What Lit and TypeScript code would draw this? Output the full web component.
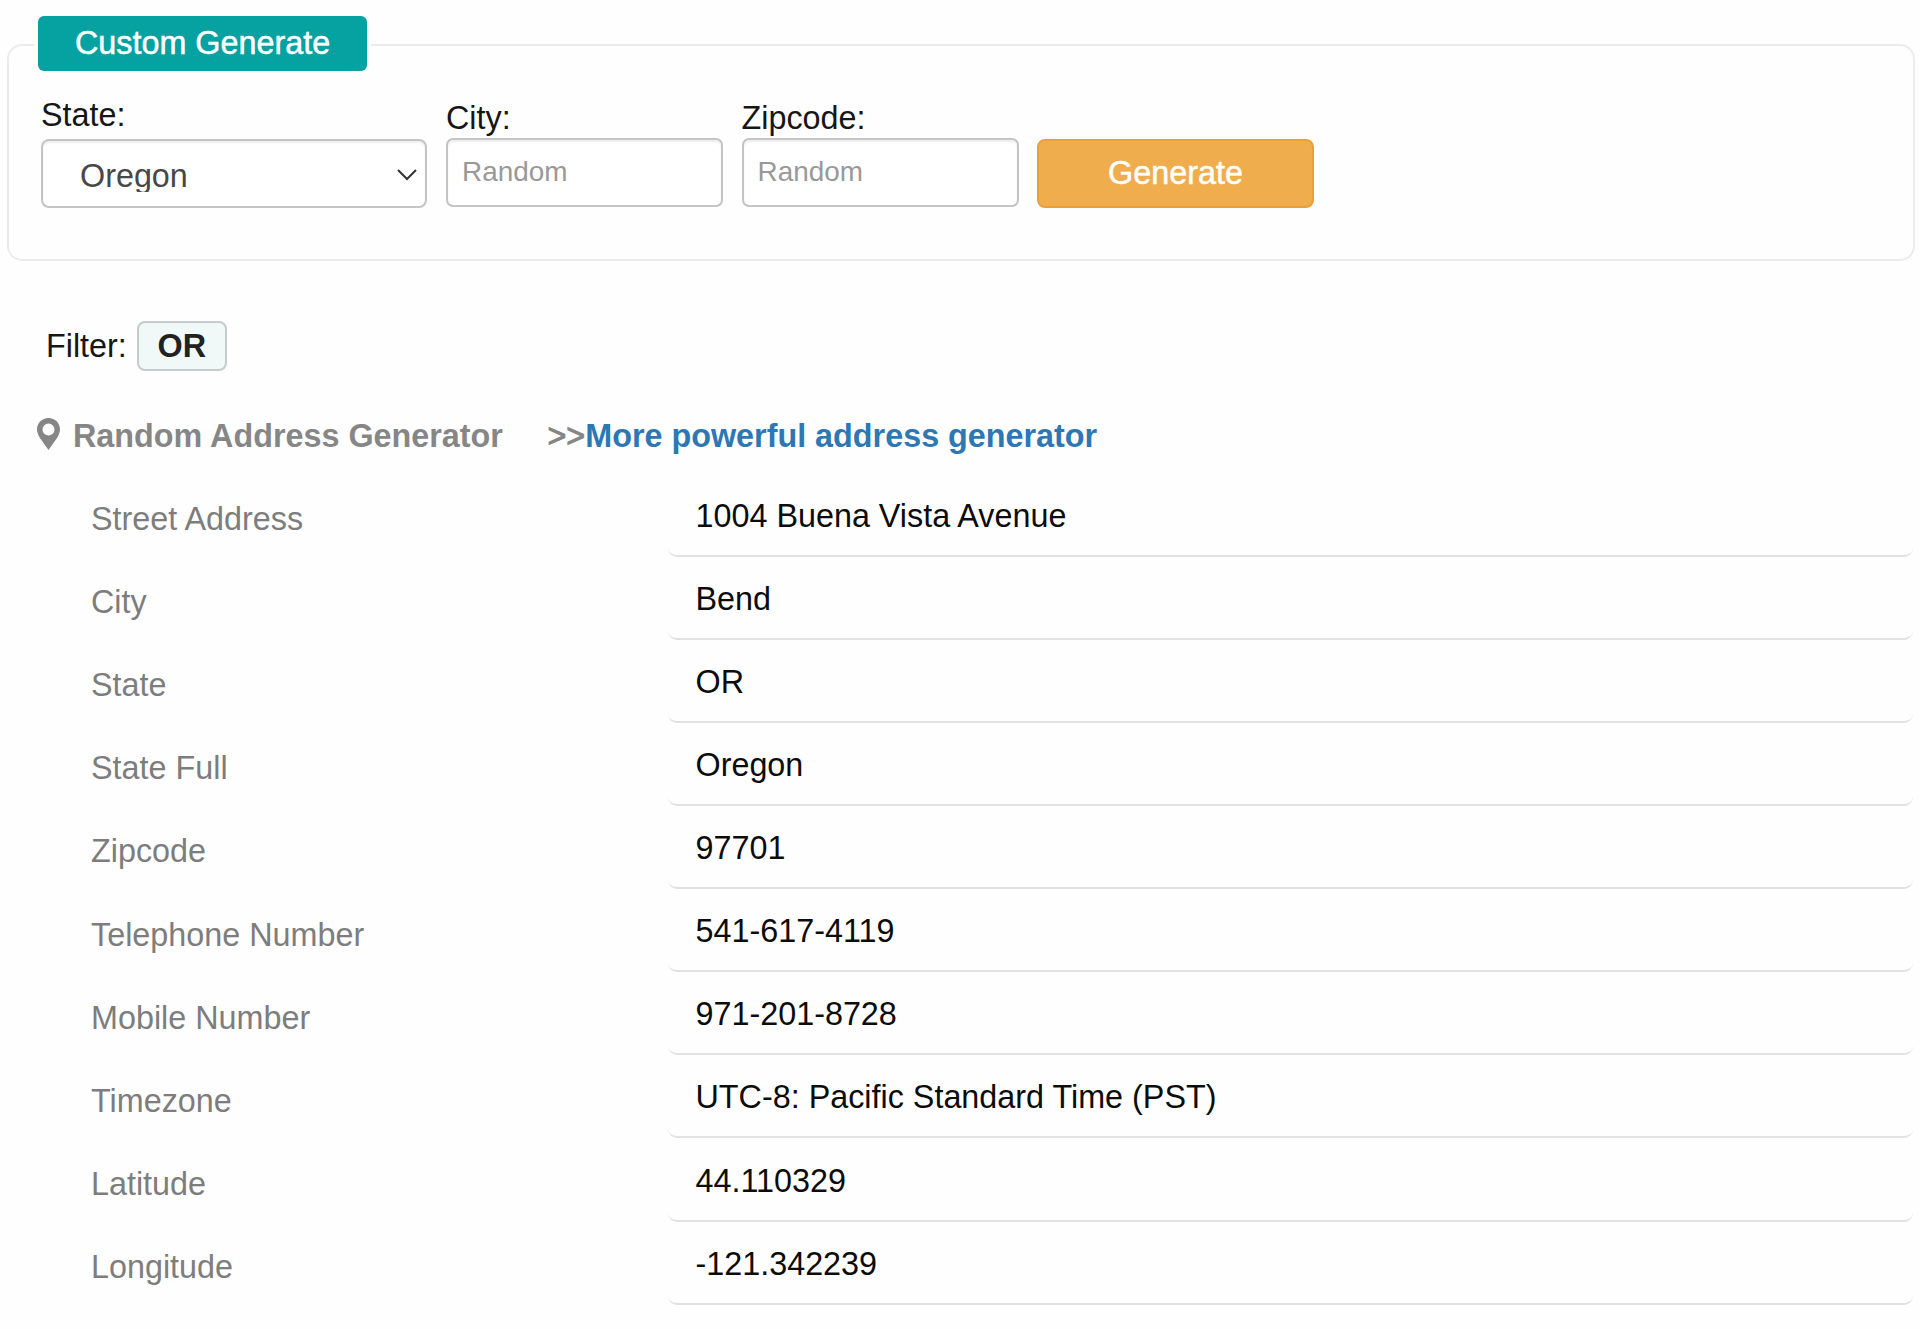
import { LitElement, html, css } from "lit";
import { customElement, property } from "lit/decorators.js";

const base = css`
  * { box-sizing: border-box; }
  :host { box-sizing: border-box; font-family: "Liberation Sans", Arial, sans-serif; }
`;

@customElement("generate-form")
class GenerateForm extends LitElement {
  static styles = [base, css`
    :host { display: block; }
    .panel {
      margin: 0 5px 0 7px;
      padding: 0 0 0 32px;
      height: 245px;
      border: 2px solid #ececec;
      border-radius: 15px;
      min-width: 0;
    }
    .legend { margin-left: -7px; padding: 0 4px 2px; height: 57px; }
    .tag {
      display: block;
      width: 329px;
      height: 55px;
      line-height: 55px;
      padding-left: 37px;
      border-radius: 6px;
      background: #05a2a1;
      color: #fff;
      white-space: nowrap;
      -webkit-text-stroke: 0.5px #fff;
    }
    .fields { display: flex; align-items: flex-start; padding-top: 24px; }
    .state { width: 386px; margin-right: 19px; }
    .field { width: 277px; margin-right: 18.5px; padding-top: 3px; }
    .label { display: block; height: 42px; line-height: 36px; white-space: nowrap; }
    .field .label { height: 38px; }
    .select {
      display: flex;
      align-items: center;
      justify-content: space-between;
      height: 69px;
      padding: 2px 8px 0 37px;
      border: 2px solid #c4c4c4;
      border-radius: 8px;
      background: #fff;
      box-shadow: inset 0 2px 2px rgba(0, 0, 0, 0.07);
      color: #484848;
    }
    .choice { height: 32px; line-height: 32px; overflow: hidden; margin-top: 2px; }
    .chevron { width: 20px; height: 12px; margin-top: 1px; }
    .input {
      display: block;
      width: 100%;
      height: 69px;
      padding: 0 14px 1px;
      border: 2px solid #c4c4c4;
      border-radius: 7px;
      background: #fff;
      box-shadow: inset 0 2px 2px rgba(0, 0, 0, 0.07);
      font: 27.9px "Liberation Sans", Arial, sans-serif;
      outline: none;
    }
    .input::placeholder { color: #999; opacity: 1; }
    .button {
      width: 277px;
      height: 69px;
      margin-top: 42px;
      padding: 0;
      border: 2px solid #ec9f37;
      border-radius: 8px;
      background: #f0ad4e;
      color: #fff;
      font: inherit;
      -webkit-text-stroke: 0.5px #fff;
    }
  `];

  render() {
    return html`
      <fieldset class="panel">
        <legend class="legend"><span class="tag">Custom Generate</span></legend>
        <div class="fields">
          <div class="state">
            <span class="label">State:</span>
            <div class="select">
              <span class="choice">Oregon</span>
              <svg class="chevron" viewBox="0 0 20 12" fill="none" stroke="#333" stroke-width="2">
                <path d="M1 1 L10 10 L19 1" />
              </svg>
            </div>
          </div>
          <label class="field"><span class="label">City:</span><input class="input" placeholder="Random" /></label>
          <label class="field"><span class="label">Zipcode:</span><input class="input" placeholder="Random" /></label>
          <button class="button">Generate</button>
        </div>
      </fieldset>
    `;
  }
}

@customElement("address-row")
class AddressRow extends LitElement {
  @property() label = "";
  @property() value = "";

  static styles = [base, css`
    :host { display: flex; height: 83.15px; padding: 0 7px 0 91px; }
    .label { width: 577px; line-height: 36px; padding-top: 11.4px; color: #7d7d7d; }
    .value {
      flex: 1;
      height: 67px;
      line-height: 36px;
      padding: 8px 0 0 27.5px;
      border-bottom: 2px solid #e2e2e2;
      border-radius: 9px;
      color: #0c0c0c;
    }
  `];

  render() {
    return html`<div class="label">${this.label}</div><div class="value">${this.value}</div>`;
  }
}

@customElement("app-root")
class AppRoot extends LitElement {
  rows = [
    ["Street Address", "1004 Buena Vista Avenue"],
    ["City", "Bend"],
    ["State", "OR"],
    ["State Full", "Oregon"],
    ["Zipcode", "97701"],
    ["Telephone Number", "541-617-4119"],
    ["Mobile Number", "971-201-8728"],
    ["Timezone", "UTC-8: Pacific Standard Time (PST)"],
    ["Latitude", "44.110329"],
    ["Longitude", "-121.342239"],
  ];

  static styles = [base, css`
    :host {
      display: block;
      height: 1329px;
      padding-top: 16px;
      overflow: hidden;
      background: #fefefe;
      color: #161616;
      font-size: 32.35px;
    }
    .filter { display: flex; align-items: center; height: 50px; margin: 60px 0 0 46px; line-height: 36px; }
    .badge {
      width: 90px;
      height: 50px;
      margin-left: 10px;
      line-height: 46px;
      border: 2px solid #c6cbcb;
      border-radius: 8px;
      background: #f1f8f8;
      color: #222;
      font-weight: bold;
      text-align: center;
    }
    .heading {
      display: flex;
      margin: 46.5px 0 0 37px;
      height: 72px;
      line-height: 36px;
      font-weight: bold;
      font-size: 32.35px;
      color: #868686;
      white-space: nowrap;
    }
    .pin { width: 23px; height: 32px; margin-right: 13px; }
    .more { margin-left: 44.5px; }
    .arrows { font-weight: normal; -webkit-text-stroke: 0.9px #868686; }
    .link { color: #2e77b5; text-decoration: none; }
  `];

  render() {
    return html`
      <generate-form></generate-form>
      <div class="filter"><span>Filter:</span><span class="badge">OR</span></div>
      <div class="heading">
        <svg class="pin" viewBox="0 0 23 32" fill="#868686">
          <path fill-rule="evenodd" d="M11.5 0C5 0 0 5 0 11.3c0 3 1 5.2 2.6 8.1L11.5 32l8.9-12.6c1.6-2.9 2.6-5.1 2.6-8.1C23 5 18 0 11.5 0Zm0 5.5a6 6 0 1 1 0 12 6 6 0 0 1 0-12Z" />
        </svg>
        <span>Random Address Generator</span>
        <span class="more"><span class="arrows">&gt;&gt;</span><a class="link">More powerful address generator</a></span>
      </div>
      ${this.rows.map(([l, v]) => html`<address-row .label=${l} .value=${v}></address-row>`)}
    `;
  }
}
